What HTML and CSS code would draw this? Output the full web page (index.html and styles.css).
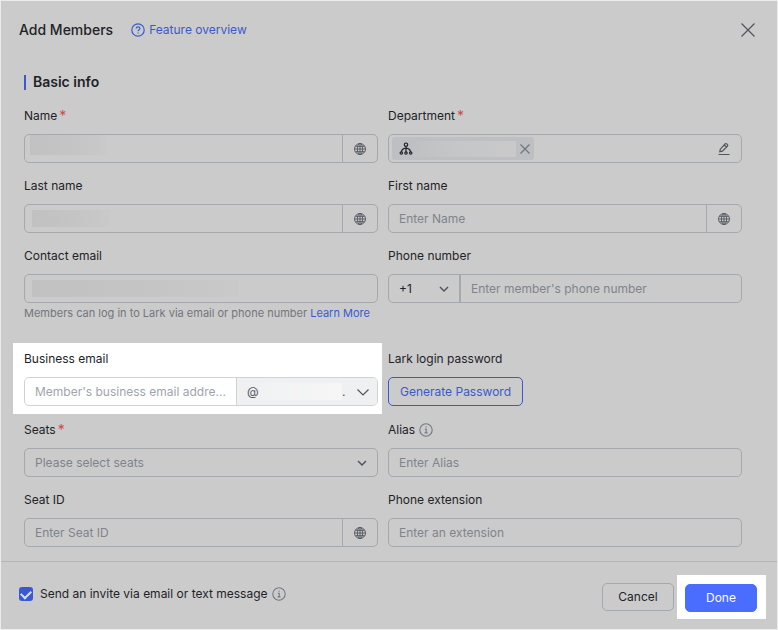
FILE: index.html
```html
<!DOCTYPE html>
<html lang="en">
<head>
    <meta charset="UTF-8">
    <meta name="viewport" content="width=device-width, initial-scale=1.0">
    <title>Add Members</title>
    <link rel="stylesheet" href="styles.css">
</head>
<body>

    <!-- Shared icons -->
    <svg class="sprite" aria-hidden="true">
        <symbol id="icon-globe" viewBox="0 0 14 14">
            <circle cx="7" cy="7" r="5.5"/>
            <ellipse cx="7" cy="7" rx="2.6" ry="5.5"/>
            <path d="M7 1.5v11M1.5 7h11M2.3 4.3h9.4M2.3 9.7h9.4"/>
        </symbol>
        <symbol id="icon-chevron" viewBox="0 0 14 14">
            <path d="M3 5l4 4 4-4"/>
        </symbol>
        <symbol id="icon-info" viewBox="0 0 14 14">
            <circle cx="7" cy="7" r="6.2"/>
            <path d="M5.8 6.3H7.2V9.8M5.6 9.9h3M6.6 4.1h1"/>
        </symbol>
    </svg>

    <form class="dialog">
        <div class="header">
            <h1>Add Members</h1>
            <a class="overview" href="#">
                <svg class="icon" viewBox="0 0 14 14"><circle cx="7" cy="7" r="6.2"/><path d="M5.2 5.6C5.2 3.3 8.9 3.4 8.9 5.5C8.9 6.9 7.1 6.8 7.1 8.3M7.1 9.4v1.2"/></svg>
                Feature overview
            </a>
            <button type="button" class="close" aria-label="Close">
                <svg viewBox="0 0 16 16"><path d="M1.5 1.5l13 13M14.5 1.5l-13 13"/></svg>
            </button>
        </div>

        <div class="content">
            <h2>Basic info</h2>

            <div class="fields">
                <div class="field">
                    <label for="name">Name<span class="required">*</span></label>
                    <div class="control">
                        <span class="masked masked-name"></span>
                        <input type="text" id="name">
                        <button type="button" class="addon" aria-label="Name languages"><svg class="icon"><use href="#icon-globe"/></svg></button>
                    </div>
                </div>

                <div class="field">
                    <label for="department">Department<span class="required">*</span></label>
                    <div class="control">
                        <span class="tag">
                            <svg class="icon dark" viewBox="0 0 14 14"><circle cx="7" cy="2.7" r="1.7"/><circle cx="2.3" cy="11" r="1.2"/><circle cx="7" cy="11" r="1.2"/><circle cx="11.7" cy="11" r="1.2"/><path d="M7 4.4v5.4M7 6.2C5 6.4 2.8 7.5 2.4 9.8M7 6.2c2 .2 4.2 1.3 4.6 3.6"/></svg>
                            <span class="masked-tag"></span>
                            <button type="button" aria-label="Remove department"><svg class="icon" viewBox="0 0 14 14"><path d="M2.5 2.5l9 9M11.5 2.5l-9 9"/></svg></button>
                        </span>
                        <input type="text" id="department">
                        <button type="button" class="edit" aria-label="Edit department"><svg class="icon" viewBox="0 0 14 14"><path d="M2.8 9.7L3.3 7.2 8.3 1.8Q9 1.2 9.8 1.9L10.5 2.6Q11.1 3.3 10.5 4L5.4 9.2ZM7.3 3l2.2 2.2M1.5 12.5h11"/></svg></button>
                    </div>
                </div>

                <div class="field">
                    <label for="last-name">Last name</label>
                    <div class="control">
                        <span class="masked masked-last"></span>
                        <input type="text" id="last-name">
                        <button type="button" class="addon" aria-label="Last name languages"><svg class="icon"><use href="#icon-globe"/></svg></button>
                    </div>
                </div>

                <div class="field">
                    <label for="first-name">First name</label>
                    <div class="control">
                        <input type="text" id="first-name" placeholder="Enter Name">
                        <button type="button" class="addon" aria-label="First name languages"><svg class="icon"><use href="#icon-globe"/></svg></button>
                    </div>
                </div>

                <div class="field">
                    <label for="contact-email">Contact email</label>
                    <div class="control">
                        <span class="masked masked-email"></span>
                        <input type="email" id="contact-email">
                    </div>
                    <p class="help">Members can log in to Lark via email or phone number <a href="#">Learn More</a></p>
                </div>

                <div class="field">
                    <label for="phone">Phone number</label>
                    <div class="control">
                        <div class="select country">
                            <select aria-label="Country code"><option>+1</option></select>
                            <span class="select-face"><svg class="icon"><use href="#icon-chevron"/></svg></span>
                        </div>
                        <input type="tel" id="phone" placeholder="Enter member's phone number">
                    </div>
                </div>

                <div class="field highlight">
                    <label for="business-email">Business email</label>
                    <div class="control">
                        <input type="text" id="business-email" placeholder="Member's business email addre...">
                        <div class="select domain">
                            <select aria-label="Email domain"><option>@</option></select>
                            <span class="select-face">
                                <span class="masked-domain"></span>
                                <span class="dot">.</span>
                                <svg class="icon" viewBox="0 0 14 14"><path d="M1.5 4.5l5.5 5.5 5.5-5.5"/></svg>
                            </span>
                        </div>
                    </div>
                </div>

                <div class="field">
                    <label for="generate">Lark login password</label>
                    <button type="button" class="btn btn-outline" id="generate" aria-label="Generate Password">Generate Password</button>
                </div>

                <div class="field">
                    <label for="seats">Seats<span class="required">*</span></label>
                    <div class="control">
                        <div class="select seats">
                            <select id="seats"><option>Please select seats</option></select>
                            <span class="select-face"><svg class="icon"><use href="#icon-chevron"/></svg></span>
                        </div>
                    </div>
                </div>

                <div class="field">
                    <label for="alias">Alias <svg class="icon info"><use href="#icon-info"/></svg></label>
                    <div class="control">
                        <input type="text" id="alias" placeholder="Enter Alias">
                    </div>
                </div>

                <div class="field">
                    <label for="seat-id">Seat ID</label>
                    <div class="control">
                        <input type="text" id="seat-id" placeholder="Enter Seat ID">
                        <button type="button" class="addon" aria-label="Seat ID languages"><svg class="icon"><use href="#icon-globe"/></svg></button>
                    </div>
                </div>

                <div class="field">
                    <label for="extension">Phone extension</label>
                    <div class="control">
                        <input type="text" id="extension" placeholder="Enter an extension">
                    </div>
                </div>
            </div>
        </div>

        <div class="footer">
            <input type="checkbox" id="invite" checked>
            <label for="invite">Send an invite via email or text message</label>
            <svg class="icon info"><use href="#icon-info"/></svg>
            <div class="actions">
                <button type="button" class="btn">Cancel</button>
                <div class="spot">
                    <button type="submit" class="btn btn-primary">Done</button>
                </div>
            </div>
        </div>
    </form>

</body>
</html>
```
FILE: styles.css
```css
* {
    box-sizing: border-box;
}

body {
    margin: 0;
    font-family: Inter, "Liberation Sans", sans-serif;
    font-size: 12px;
    line-height: 20px;
    color: #1f2329;
}

button, input, select {
    font: inherit;
    color: inherit;
    margin: 0;
}

button {
    padding: 0;
    border: none;
    background: none;
    cursor: pointer;
}

a {
    color: #3a59d1;
    text-decoration: none;
}

h1, h2, p {
    margin: 0;
}

.sprite {
    display: none;
}

.icon, .close svg {
    display: block;
    flex: none;
    width: 14px;
    height: 14px;
    fill: none;
    stroke: #50555d;
    stroke-width: 1.2;
}

.icon.dark {
    stroke: #1f2329;
}

.icon.info {
    stroke: #727984;
    stroke-width: 1.1;
}

.dialog {
    display: flex;
    flex-direction: column;
    min-height: 100vh;
    background-color: #cbcbcb;
    border: 1px solid #ececec;
}

/* Header */
.header {
    display: flex;
    align-items: center;
    padding: 18px 21px 0 18px;
}

h1 {
    font-size: 14px;
    font-weight: 500;
    line-height: 22px;
}

.overview {
    display: flex;
    align-items: center;
    gap: 4px;
    margin-left: 18px;
}

.overview .icon {
    stroke: #3a59d1;
}

.close {
    margin-left: auto;
}

.close svg {
    width: 16px;
    height: 16px;
}

/* Fields */
.content {
    flex: 1;
    padding: 30px 35px 13px 23px;
}

h2 {
    display: flex;
    align-items: center;
    gap: 7px;
    margin-bottom: 13px;
    font-size: 14px;
    font-weight: 600;
    line-height: 22px;
}

h2::before {
    content: "";
    width: 2px;
    height: 15px;
    background-color: #3a59d1;
}

.fields {
    display: grid;
    grid-template-columns: 1fr 1fr;
    gap: 13px 10px;
}

.field {
    min-width: 0;
}

.field label {
    display: flex;
    align-items: center;
    gap: 4px;
    height: 20px;
    margin-bottom: 8px;
}

.required {
    margin-left: -2px;
    font-size: 14px;
    color: #d04a46;
}

.control {
    display: flex;
    align-items: stretch;
    height: 29px;
    border: 1px solid #a5a8ac;
    border-radius: 5px;
    overflow: hidden;
}

.control input {
    flex: 1;
    min-width: 0;
    padding: 0 10px;
    border: none;
    outline: none;
    background: none;
}

.control ::placeholder {
    color: #7f848c;
    opacity: 1;
}

.addon {
    display: flex;
    align-items: center;
    justify-content: center;
    width: 35px;
    padding-right: 1px;
    border-left: 1px solid #a5a8ac;
}

.addon .icon {
    stroke-width: 0.9;
}

.edit {
    padding: 0 10px;
}

.help {
    margin: 2px 0 15px;
    font-size: 11px;
    line-height: 16px;
    color: #73767b;
    white-space: nowrap;
}

/* Hidden personal data */
.masked {
    align-self: center;
    height: 17px;
    margin-left: 7px;
    background: linear-gradient(to right, #c1c1c1, #c4c4c4 50%, #c9c9c9);
}

.masked-name {
    width: 77px;
    height: 20px;
    align-self: flex-start;
    margin-left: 5px;
}

.masked-last {
    width: 78px;
}

.masked-email {
    width: 206px;
}

.tag {
    display: flex;
    align-items: center;
    width: 142px;
    margin: 2px 3px;
    padding: 0 2px 0 7px;
    border-radius: 3px;
    background-color: #bdbfc2;
}

.tag button .icon {
    stroke: #727984;
    stroke-width: 1.4;
}

.masked-tag {
    flex: 1;
    height: 16px;
    margin-right: 2px;
    background: linear-gradient(to right, #bfc0c2, #c5c6c7 40%, #c9c9ca);
}

/* Selects */
.select {
    display: grid;
    flex: none;
}

.select > * {
    grid-area: 1 / 1;
}

.select select {
    width: 100%;
    padding: 0 10px;
    border: none;
    outline: none;
    appearance: none;
    background: none;
}

.select-face {
    display: flex;
    align-items: center;
    justify-content: flex-end;
    padding-right: 8px;
    pointer-events: none;
}

.select-face .icon {
    stroke-width: 1.5;
}

.country {
    width: 72px;
    border-right: 2px solid #a5a8ac;
}

.seats {
    flex: 1;
}

.seats select {
    color: #7f848c;
}

.domain {
    width: 141px;
    border-left: 1px solid #d0d3d6;
    background-color: #eff0f1;
    color: #50555d;
}

.masked-domain {
    width: 82px;
    height: 17px;
    background: linear-gradient(to right, #f1f2f3, #f6f6f6);
}

.dot {
    width: 6px;
    margin-right: 8px;
}

/* Highlighted areas */
.highlight {
    margin: -6px -4px -7px -11px;
    padding: 6px 4px 8px 11px;
    background-color: #ffffff;
}

.highlight .control {
    border-color: #d0d3d6;
}

.highlight ::placeholder {
    color: #9fa4ac;
}

.highlight .select-face {
    padding-right: 7px;
}

.highlight .icon {
    stroke-width: 1.2;
}

.spot {
    padding: 9px 9px 7px 8px;
    background-color: #ffffff;
}

/* Buttons */
.btn {
    height: 28px;
    min-width: 72px;
    padding: 0 11px;
    border: 1px solid #a5a8ac;
    border-radius: 5px;
}

.btn-outline {
    height: 29px;
    border-color: #3a59d1;
    color: #3a59d1;
}

.btn-primary {
    border-color: #4a6cff;
    background-color: #4a6cff;
    color: #ffffff;
}

/* Footer */
.footer {
    display: flex;
    align-items: center;
    padding: 13px 11px 10px 18px;
    border-top: 1px solid #b4b5b6;
}

.footer label {
    margin: 0 4px 0 7px;
}

.footer > label, .footer > input, .footer > .icon {
    align-self: flex-start;
    margin-top: 9px;
}

.footer > input, .footer > .icon {
    margin-top: 12px;
}

.footer > input {
    display: grid;
    place-items: center;
    width: 14px;
    height: 14px;
    appearance: none;
    border-radius: 3px;
    background-color: #c9c9c9;
    border: 1px solid #a5a8ac;
}

.footer > input:checked {
    border: none;
    background-color: #3a59d1;
}

.footer > input:checked::before {
    content: "";
    width: 8px;
    height: 5px;
    margin-bottom: 2px;
    border-left: 2px solid #d9dcea;
    border-bottom: 2px solid #d9dcea;
    transform: rotate(-45deg);
}

.actions {
    display: flex;
    align-items: center;
    gap: 3px;
    margin-left: auto;
}
```
